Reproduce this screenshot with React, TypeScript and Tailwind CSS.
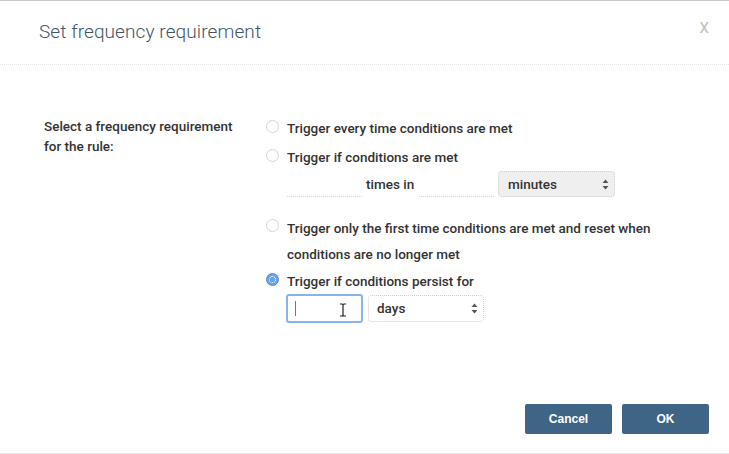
import { useState } from "react";

const font = { fontFamily: "Roboto, 'Liberation Sans', sans-serif" };

function Radio({ checked }: { checked?: boolean }) {
  if (checked) {
    return (
      <span className="w-[13px] h-[13px] rounded-full bg-[#6aa3e3] border border-[#4f8fd8] flex items-center justify-center shrink-0">
        <span className="w-[7px] h-[7px] rounded-full border border-dotted border-white" />
      </span>
    );
  }
  return <span className="w-[13px] h-[13px] rounded-full border border-[#d6d6d6] bg-white shrink-0" />;
}

function Arrows() {
  return (
    <svg width="7" height="11" viewBox="0 0 7 11" className="shrink-0">
      <path d="M3.5 0.5 L6.5 4 L0.5 4 Z" fill="#555" />
      <path d="M3.5 10.5 L6.5 7 L0.5 7 Z" fill="#555" />
    </svg>
  );
}

export default function App() {
  const [choice] = useState(3);
  const options = [
    "Trigger every time conditions are met",
    "Trigger if conditions are met",
    "Trigger only the first time conditions are met and reset when conditions are no longer met",
    "Trigger if conditions persist for",
  ];

  return (
    <div style={font} className="w-[729px] h-[454px] bg-white border-t border-[#c8c8c8] flex flex-col">
      {/* Header */}
      <div className="h-[64px] pl-[39px] pr-[20px] flex items-center justify-between border-b border-dotted border-[#e6e6e6] shrink-0">
        <h2 className="text-[19px] font-light text-[#3f5468] tracking-[0.1px]">Set frequency requirement</h2>
        <span className="text-[15px] text-[#bdbdbd] -mt-[8px]">X</span>
      </div>

      {/* Body */}
      <div className="flex-1 flex pl-[44px] pt-[53px]">
        <div className="w-[222px] text-[13.5px] font-medium text-[#333] leading-[20px] -mt-[2px]">
          Select a frequency requirement
          <br />
          for the rule:
        </div>

        <div className="text-[13.5px] font-medium text-[#333]">
          <label className="flex items-center gap-[8px] h-[20px] leading-[20px]">
            <span className="-mt-[4px] flex"><Radio checked={choice === 0} /></span>
            {options[0]}
          </label>

          <label className="flex items-center gap-[8px] h-[20px] leading-[20px] mt-[9px]">
            <span className="-mt-[4px] flex"><Radio checked={choice === 1} /></span>
            {options[1]}
          </label>

          <div className="flex items-center h-[26px] mt-[4px] pl-[21px]">
            <div className="w-[75px] h-[26px] border-b border-dotted border-[#d8d8d8]" />
            <span className="ml-[4px] w-[53px]">times in</span>
            <div className="w-[75px] h-[26px] border-b border-dotted border-[#d8d8d8]" />
            <div className="ml-[4px] w-[117px] h-[26px] rounded-[4px] border border-dotted border-[#cfcfcf] bg-[#efefef] flex items-center justify-between pl-[9px] pr-[5px]">
              <span>minutes</span>
              <Arrows />
            </div>
          </div>

          <div className="flex items-start gap-[8px] mt-[18px]">
            <span className="mt-[4px] flex"><Radio checked={choice === 2} /></span>
            <span className="leading-[26px] w-[380px]">{options[2]}</span>
          </div>

          <label className="flex items-center gap-[8px] h-[20px] leading-[20px] mt-[4px]">
            <span className="-mt-[4px] flex"><Radio checked={choice === 3} /></span>
            {options[3]}
          </label>

          <div className="flex items-center gap-[5px] mt-[3px] pl-[20px]">
            <div className="w-[77px] h-[29px] rounded-[3px] border-2 border-[#86b5ec] bg-white flex items-center px-[7px] relative">
              <span className="w-px h-[15px] bg-[#777]" />
              <svg width="8" height="14" viewBox="0 0 8 14" className="absolute left-[51px] top-[7px]">
                <path d="M1 1 H3 Q4 1 4 2.5 V11.5 Q4 13 3 13 H1 M7 1 H5 Q4 1 4 2.5 M4 11.5 Q4 13 5 13 H7" fill="none" stroke="#222" strokeWidth="1.2" />
              </svg>
            </div>
            <div className="w-[116px] h-[27px] rounded-[4px] border border-dotted border-[#cfcfcf] bg-white flex items-center justify-between pl-[8px] pr-[5px]">
              <span>days</span>
              <Arrows />
            </div>
          </div>
        </div>
      </div>

      {/* Footer */}
      <div className="flex justify-end gap-[10px] pr-[20px] pb-[19px] border-b border-[#e8e8e8] shrink-0">
        <button className="w-[87px] h-[30px] rounded-[2px] bg-[#3e6586] text-white text-[12px] font-bold" style={{ fontFamily: "'Liberation Sans', sans-serif" }}>
          Cancel
        </button>
        <button className="w-[87px] h-[30px] rounded-[2px] bg-[#3e6586] text-white text-[12px] font-bold" style={{ fontFamily: "'Liberation Sans', sans-serif" }}>
          OK
        </button>
      </div>
    </div>
  );
}
